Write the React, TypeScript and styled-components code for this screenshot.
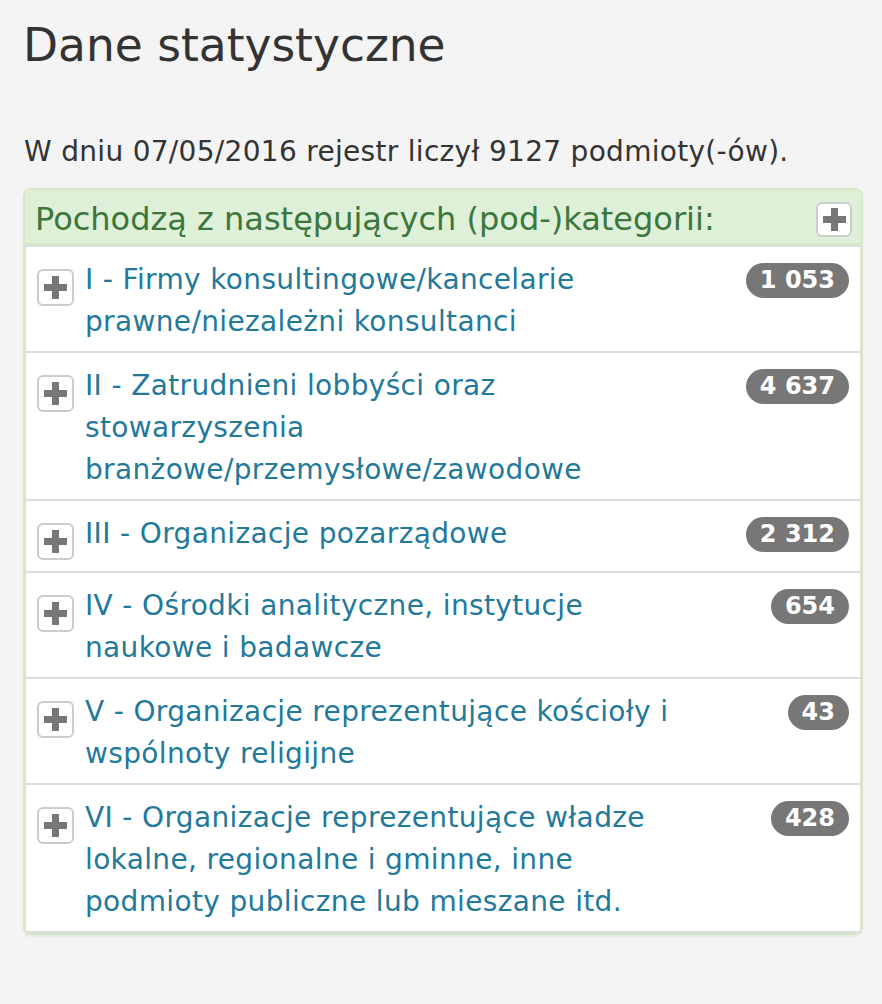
import React from "react";
import {createGlobalStyle, styled} from "styled-components";

const GlobalStyle = createGlobalStyle`
  html, body {
    margin: 0;
    padding: 0;
    background: #f4f4f4;
  }
  body {
    font-family: "DejaVu Sans", Verdana, sans-serif;
    color: #333;
  }
`

const Page = styled.main`
  padding: 20px 19px 40px 23px;
`

const Title = styled.h1`
  margin: 0;
  font-size: 45.5px;
  font-weight: normal;
  line-height: 52px;
  color: #333;
`

const Intro = styled.p`
  margin: 59px 0 15px 1px;
  font-size: 28px;
  line-height: 42px;
  letter-spacing: 0.3px;
`

const Panel = styled.section`
  border: 2px solid #d6e9c6;
  border-radius: 8px;
  background: #fff;
  box-shadow: 0 2px 2px rgba(0, 0, 0, 0.05);
  overflow: hidden;
`

const PanelHeading = styled.header`
  display: flex;
  justify-content: space-between;
  align-items: flex-start;
  padding: 12px 9px 6px 10px;
  background: #dff0d8;
  border-bottom: 2px solid #d6e9c6;
`

const PanelTitle = styled.h3`
  margin: 0;
  font-size: 32px;
  font-weight: normal;
  line-height: 35px;
  color: #3c763d;
`

const ListGroup = styled.ul`
  list-style: none;
  margin: 0;
  padding: 0;
  border-left: 1px solid #ddd;
  border-right: 1px solid #ddd;
`

const ListItem = styled.li`
  display: flex;
  align-items: flex-start;
  padding: 12px 11px 8px 11px;
  border-top: 2px solid #ddd;

  &:last-child {
    border-bottom: 2px solid #ddd;
  }
`

const ToggleButton = styled.button<{ $width: number; $height: number }>`
  flex: none;
  display: flex;
  align-items: center;
  justify-content: center;
  width: ${p => p.$width}px;
  height: ${p => p.$height}px;
  margin: 10px 11px 3px 0;
  padding: 0;
  background: #fff;
  border: 2px solid #ccc;
  border-radius: 6px;
  cursor: pointer;
`

const HeadingToggle = styled(ToggleButton)`
  margin: 0;
`

const ItemLabel = styled.a`
  flex: 1;
  max-width: 600px;
  font-size: 28px;
  line-height: 42px;
  letter-spacing: 0.35px;
  color: #23799a;
  text-decoration: none;
`

const Badge = styled.span`
  flex: none;
  margin: 4px 0 0 auto;
  height: 35px;
  padding: 0 14px;
  border-radius: 18px;
  background: #777;
  color: #fff;
  font-size: 24px;
  font-weight: bold;
  line-height: 35px;
  white-space: nowrap;
`

const PlusIcon = () => (
    <svg width="23" height="23" viewBox="0 0 23 23">
        <rect x="0" y="8" width="23" height="7" fill="#777"/>
        <rect x="8" y="0" width="7" height="23" fill="#777"/>
    </svg>
)

const categories = [
    {label: "I - Firmy konsultingowe/kancelarie prawne/niezależni konsultanci", count: "1 053"},
    {label: "II - Zatrudnieni lobbyści oraz stowarzyszenia branżowe/przemysłowe/zawodowe", count: "4 637"},
    {label: "III - Organizacje pozarządowe", count: "2 312"},
    {label: "IV - Ośrodki analityczne, instytucje naukowe i badawcze", count: "654"},
    {label: "V - Organizacje reprezentujące kościoły i wspólnoty religijne", count: "43"},
    {label: "VI - Organizacje reprezentujące władze lokalne, regionalne i gminne, inne podmioty publiczne lub mieszane itd.", count: "428"},
]

const App = () => {
    return (
        <>
            <GlobalStyle/>
            <Page>
                <Title>Dane statystyczne</Title>
                <Intro>W dniu 07/05/2016 rejestr liczył 9127 podmioty(-ów).</Intro>
                <Panel>
                    <PanelHeading>
                        <PanelTitle>Pochodzą z następujących (pod-)kategorii:</PanelTitle>
                        <HeadingToggle $width={36} $height={35} aria-label="rozwiń wszystkie">
                            <PlusIcon/>
                        </HeadingToggle>
                    </PanelHeading>
                    <ListGroup>
                        {categories.map((item, index) => (
                            <ListItem key={index}>
                                <ToggleButton $width={37} $height={37} aria-label="rozwiń">
                                    <PlusIcon/>
                                </ToggleButton>
                                <ItemLabel href="#">{item.label}</ItemLabel>
                                <Badge>{item.count}</Badge>
                            </ListItem>
                        ))}
                    </ListGroup>
                </Panel>
            </Page>
        </>
    );
}

export default App;
